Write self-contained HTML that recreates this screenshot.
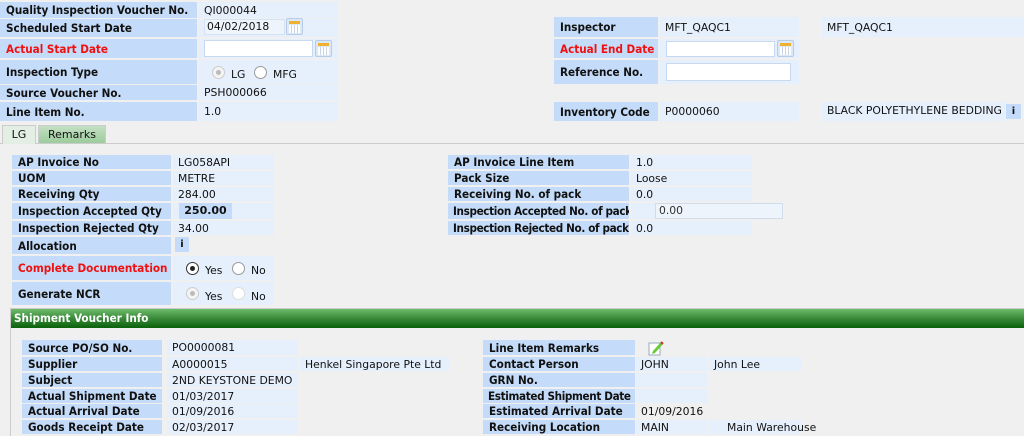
<!DOCTYPE html>
<html><head><style>
body{margin:0;width:1024px;height:436px;background:#f0f0f0;font-family:"DejaVu Sans","Liberation Sans",sans-serif;font-size:11px;color:#111;position:relative;overflow:hidden}
div{position:absolute;box-sizing:border-box}
.l{background:#c4dcf9;font-weight:bold;padding-left:6px;white-space:nowrap;display:flex;align-items:center;font-size:11.6px;font-family:"DejaVu Sans Condensed","DejaVu Sans",sans-serif;font-stretch:condensed;overflow:hidden}
.v{background:#e6f0fc;padding-left:5px;white-space:nowrap;display:flex;align-items:center;font-size:10.8px}
.r{color:#f01010}
.in{background:#fff;border:1px solid #c8d8ee}
.cal{width:17px;height:17px;background:#dbe8f8;border:1px solid #b8cce6;border-radius:2px}
.cal:before{content:"";position:absolute;left:2px;top:2px;width:11px;height:3px;background:#f0b030}
.cal:after{content:"";position:absolute;left:2px;top:6px;width:11px;height:8px;background:repeating-linear-gradient(90deg,#fff 0 2px,#c8d4e4 2px 3px)}
.rad{width:13px;height:13px;border-radius:50%;border:1px solid #999;background:#fff}
.rad.dis{border-color:#ccc;background:#f4f4f4}
.rad.dis:after{content:"";position:absolute;left:3px;top:3px;width:5px;height:5px;border-radius:50%;background:#bbb}
.rad.on{border-color:#333}
.rad.on:after{content:"";position:absolute;left:3px;top:3px;width:5px;height:5px;border-radius:50%;background:#222}
.t{white-space:nowrap;font-size:10.8px}
.ib{background:#c4dcf9;font-weight:bold;display:flex;align-items:center;justify-content:center;font-size:10px}
.tight{letter-spacing:-0.35px;padding-left:5px}
</style></head><body>
<!-- top -->
<div class="l" style="left:0;top:2px;width:197px;height:16px">Quality Inspection Voucher No.</div>
<div class="v" style="left:199px;top:2px;width:139px;height:16px">QI000044</div>
<div class="l" style="left:0;top:19px;width:197px;height:18px">Scheduled Start Date</div>
<div class="v" style="left:199px;top:19px;width:139px;height:18px"></div>
<div class="in" style="left:204px;top:19px;width:81px;height:16px;padding-left:2px;border-color:#d4e2f4;background:#eef4fc;font-size:10.8px">04/02/2018</div>
<div class="cal" style="left:286px;top:18px"></div>
<div class="l r" style="left:0;top:39px;width:197px;height:19px">Actual Start Date</div>
<div class="v" style="left:199px;top:39px;width:139px;height:19px"></div>
<div class="in" style="left:204px;top:40px;width:109px;height:17px"></div>
<div class="cal" style="left:315px;top:40px"></div>
<div class="l" style="left:0;top:60px;width:197px;height:24px">Inspection Type</div>
<div class="v" style="left:199px;top:60px;width:139px;height:24px"></div>
<div class="rad dis" style="left:212px;top:66px"></div><div class="t" style="left:231px;top:68px">LG</div>
<div class="rad" style="left:254px;top:66px"></div><div class="t" style="left:273px;top:68px">MFG</div>
<div class="l" style="left:0;top:85px;width:197px;height:15px">Source Voucher No.</div>
<div class="v" style="left:199px;top:85px;width:139px;height:15px">PSH000066</div>
<div class="l" style="left:0;top:102px;width:197px;height:19px">Line Item No.</div>
<div class="v" style="left:199px;top:102px;width:139px;height:19px">1.0</div>

<div class="l" style="left:554px;top:17px;width:104px;height:20px">Inspector</div>
<div class="v" style="left:660px;top:17px;width:139px;height:20px">MFT_QAQC1</div>
<div class="v" style="left:822px;top:17px;width:202px;height:20px">MFT_QAQC1</div>
<div class="l r" style="left:554px;top:39px;width:104px;height:19px">Actual End Date</div>
<div class="v" style="left:660px;top:39px;width:139px;height:19px"></div>
<div class="in" style="left:666px;top:41px;width:109px;height:16px"></div>
<div class="cal" style="left:777px;top:40px"></div>
<div class="l" style="left:554px;top:60px;width:104px;height:24px">Reference No.</div>
<div class="v" style="left:660px;top:60px;width:139px;height:24px"></div>
<div class="in" style="left:666px;top:63px;width:125px;height:18px"></div>
<div class="l" style="left:554px;top:102px;width:104px;height:19px">Inventory Code</div>
<div class="v" style="left:660px;top:102px;width:139px;height:19px">P0000060</div>
<div class="v" style="left:822px;top:102px;width:183px;height:19px;align-items:flex-start;padding-top:2px">BLACK POLYETHYLENE BEDDING</div>
<div class="ib" style="left:1006px;top:104px;width:15px;height:15px">i</div>
<!-- tabs -->
<div style="left:0;top:143px;width:1024px;height:1px;background:#ccc"></div>
<div style="left:2px;top:125px;width:34px;height:19px;background:#e4efe4;border:1px solid #ccc;border-bottom:none;text-align:center;line-height:18px">LG</div>
<div style="left:38px;top:125px;width:68px;height:18px;background:linear-gradient(#c4e0c4,#9ccc9c);border:1px solid #ccc;border-bottom:none;text-align:center;line-height:18px">Remarks</div>
<!-- section 2 -->
<div class="l" style="left:12px;top:155px;width:159px;height:14px">AP Invoice No</div>
<div class="v" style="left:173px;top:155px;width:101px;height:14px">LG058API</div>
<div class="l" style="left:12px;top:171px;width:159px;height:14px">UOM</div>
<div class="v" style="left:173px;top:171px;width:101px;height:14px">METRE</div>
<div class="l" style="left:12px;top:187px;width:159px;height:14px">Receiving Qty</div>
<div class="v" style="left:173px;top:187px;width:101px;height:14px">284.00</div>
<div class="l" style="left:12px;top:203px;width:159px;height:16px">Inspection Accepted Qty</div>
<div class="v" style="left:173px;top:203px;width:101px;height:16px"></div>
<div style="left:179px;top:203px;width:53px;height:16px;background:#c4dcf9;font-weight:bold;text-align:center;line-height:16px">250.00</div>
<div class="l" style="left:12px;top:221px;width:159px;height:14px">Inspection Rejected Qty</div>
<div class="v" style="left:173px;top:221px;width:101px;height:14px">34.00</div>
<div class="l" style="left:12px;top:237px;width:159px;height:17px">Allocation</div>
<div class="ib" style="left:175px;top:237px;width:14px;height:15px">i</div>
<div class="l r" style="left:12px;top:256px;width:159px;height:24px">Complete Documentation</div>
<div class="v" style="left:173px;top:256px;width:101px;height:24px"></div>
<div class="rad on" style="left:186px;top:262px"></div><div class="t" style="left:205px;top:264px">Yes</div>
<div class="rad" style="left:232px;top:262px"></div><div class="t" style="left:251px;top:264px">No</div>
<div class="l" style="left:12px;top:282px;width:159px;height:23px">Generate NCR</div>
<div class="v" style="left:173px;top:282px;width:101px;height:23px"></div>
<div class="rad dis" style="left:186px;top:287px"></div><div class="t" style="left:205px;top:290px">Yes</div>
<div class="rad" style="left:232px;top:287px;border-color:#ddd"></div><div class="t" style="left:251px;top:290px">No</div>

<div class="l" style="left:448px;top:155px;width:181px;height:14px">AP Invoice Line Item</div>
<div class="v" style="left:631px;top:155px;width:121px;height:14px">1.0</div>
<div class="l" style="left:448px;top:171px;width:181px;height:14px">Pack Size</div>
<div class="v" style="left:631px;top:171px;width:121px;height:14px">Loose</div>
<div class="l" style="left:448px;top:187px;width:181px;height:14px">Receiving No. of pack</div>
<div class="v" style="left:631px;top:187px;width:121px;height:14px">0.0</div>
<div class="l tight" style="left:448px;top:203px;width:181px;height:16px">Inspection Accepted No. of pack</div>
<div class="v" style="left:631px;top:203px;width:121px;height:16px"></div>
<div style="left:655px;top:203px;width:128px;height:16px;background:#eef4fc;border:1px solid #d0dcec;padding-left:3px;line-height:14px;color:#333;font-size:10.8px">0.00</div>
<div class="l tight" style="left:448px;top:221px;width:181px;height:14px">Inspection Rejected No. of pack</div>
<div class="v" style="left:631px;top:221px;width:121px;height:14px">0.0</div>
<!-- green bar -->
<div style="left:10px;top:308px;width:1014px;height:128px;border-left:1px solid #ccc;border-top:1px solid #ccc"></div>
<div style="left:11px;top:309px;width:1013px;height:19px;background:linear-gradient(#6cbc6c,#3e8e3e 45%,#0a620a);color:#fff;font-weight:bold;padding-left:3px;line-height:19px;font-size:11.6px;font-family:'DejaVu Sans Condensed','DejaVu Sans',sans-serif;font-stretch:condensed">Shipment Voucher Info</div>
<!-- section 3 -->
<div class="l" style="left:22px;top:340px;width:140px;height:15px">Source PO/SO No.</div>
<div class="v" style="left:167px;top:340px;width:131px;height:15px">PO0000081</div>
<div class="l" style="left:22px;top:357px;width:140px;height:14px">Supplier</div>
<div class="v" style="left:167px;top:357px;width:131px;height:14px">A0000015</div>
<div class="v" style="left:300px;top:357px;width:149px;height:14px">Henkel Singapore Pte Ltd</div>
<div class="l" style="left:22px;top:373px;width:140px;height:14px">Subject</div>
<div class="v" style="left:167px;top:373px;width:131px;height:14px">2ND KEYSTONE DEMO</div>
<div class="l" style="left:22px;top:389px;width:140px;height:14px">Actual Shipment Date</div>
<div class="v" style="left:167px;top:389px;width:131px;height:14px">01/03/2017</div>
<div class="l" style="left:22px;top:404px;width:140px;height:14px">Actual Arrival Date</div>
<div class="v" style="left:167px;top:404px;width:131px;height:14px">01/09/2016</div>
<div class="l" style="left:22px;top:420px;width:140px;height:14px">Goods Receipt Date</div>
<div class="v" style="left:167px;top:420px;width:131px;height:14px">02/03/2017</div>

<div class="l" style="left:483px;top:340px;width:152px;height:15px">Line Item Remarks</div>
<svg style="position:absolute;left:648px;top:340px" width="16" height="16" viewBox="0 0 16 16"><rect x="1" y="3" width="11" height="12" fill="#fff" stroke="#9ab"/><path d="M5 11 L13 2 L15 4 L7 13 L4 14 Z" fill="#6c3"/><path d="M13 2 L15 4" stroke="#c33" stroke-width="2"/></svg>
<div class="l" style="left:483px;top:357px;width:152px;height:14px">Contact Person</div>
<div class="v" style="left:636px;top:357px;width:71px;height:14px">JOHN</div>
<div class="v" style="left:709px;top:357px;width:92px;height:14px">John Lee</div>
<div class="l" style="left:483px;top:373px;width:152px;height:14px">GRN No.</div>
<div class="v" style="left:636px;top:373px;width:71px;height:14px"></div>
<div class="l tight" style="left:483px;top:389px;width:152px;height:14px">Estimated Shipment Date</div>
<div class="v" style="left:636px;top:389px;width:71px;height:14px"></div>
<div class="l" style="left:483px;top:404px;width:152px;height:14px">Estimated Arrival Date</div>
<div class="v" style="left:636px;top:404px;width:81px;height:14px;background:none">01/09/2016</div>
<div class="l" style="left:483px;top:420px;width:152px;height:14px">Receiving Location</div>
<div class="v" style="left:636px;top:420px;width:71px;height:14px">MAIN</div>
<div class="v" style="left:709px;top:420px;width:92px;height:14px;padding-left:18px">Main Warehouse</div>
</body></html>
